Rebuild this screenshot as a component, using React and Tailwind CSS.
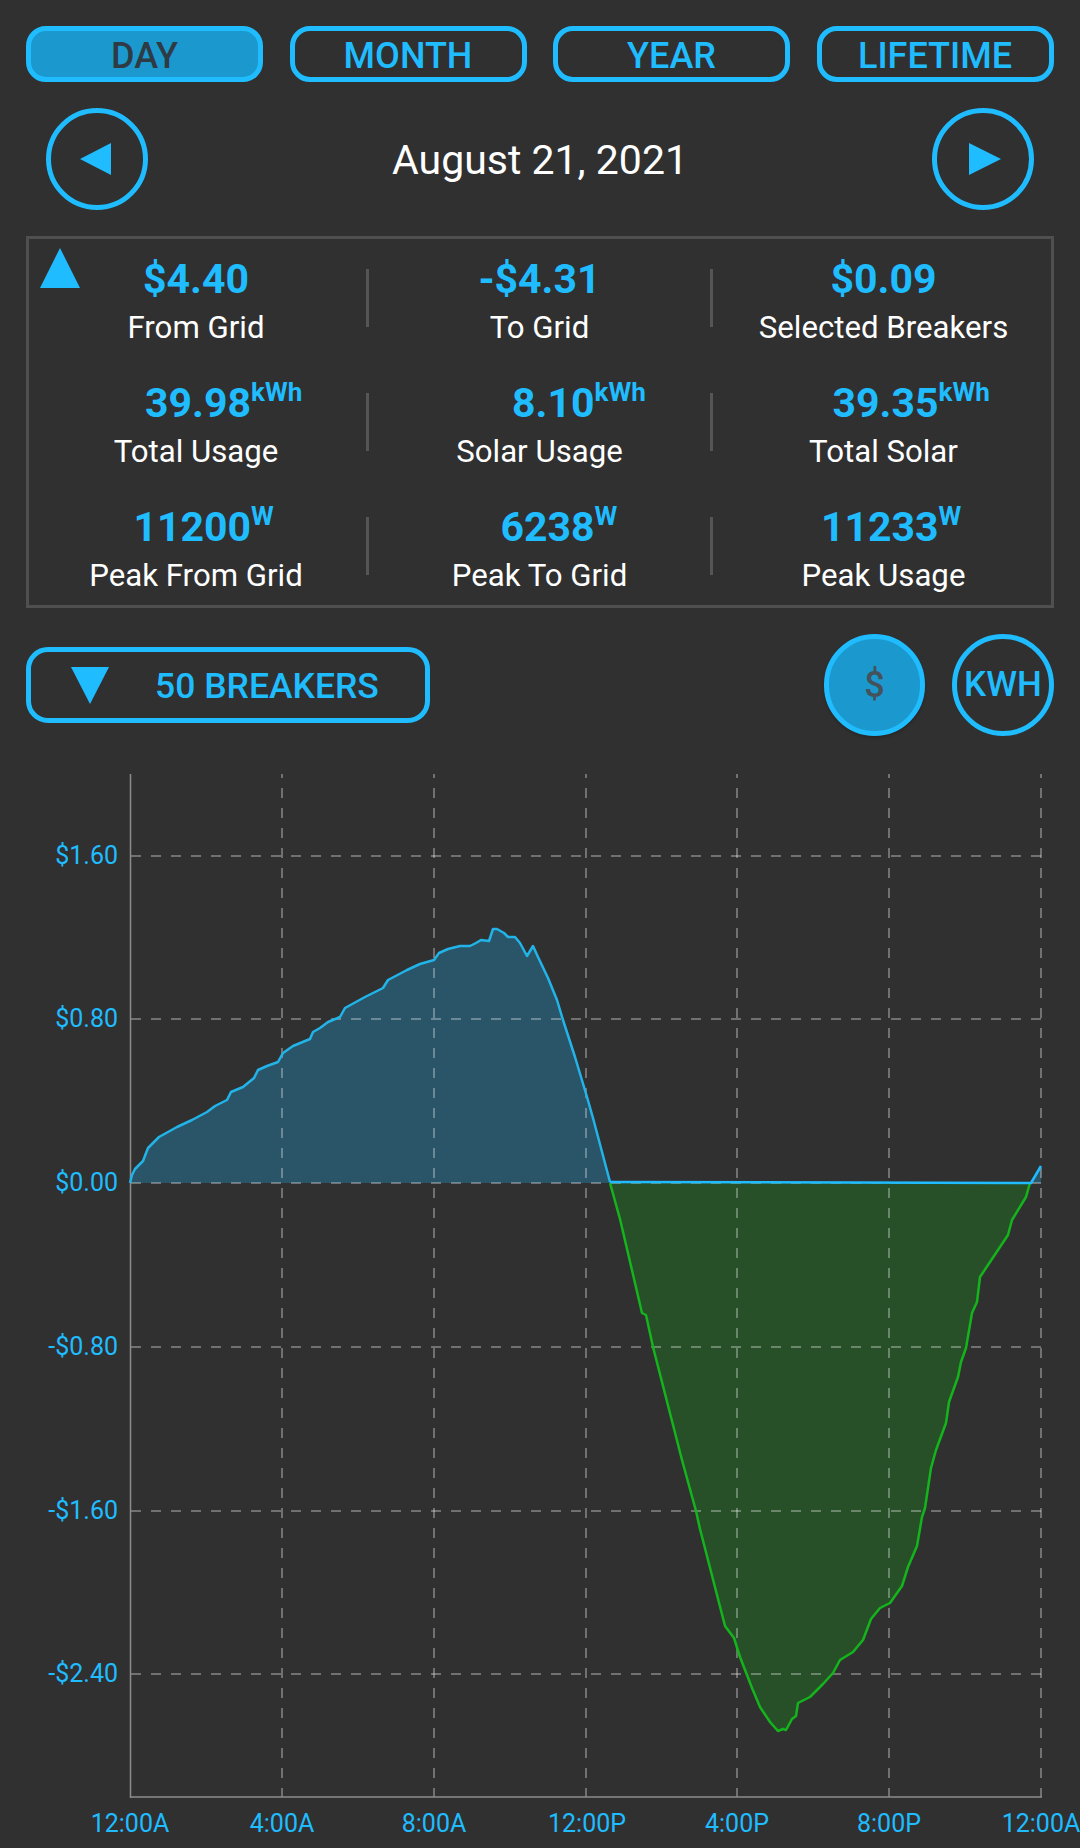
const tabs = ['DAY', 'MONTH', 'YEAR', 'LIFETIME'];

const stats = [
  [
    { value: '$4.40', label: 'From Grid' },
    { value: '-$4.31', label: 'To Grid' },
    { value: '$0.09', label: 'Selected Breakers' },
  ],
  [
    { value: '39.98', unit: 'kWh', label: 'Total Usage' },
    { value: '8.10', unit: 'kWh', label: 'Solar Usage' },
    { value: '39.35', unit: 'kWh', label: 'Total Solar' },
  ],
  [
    { value: '11200', unit: 'W', label: 'Peak From Grid' },
    { value: '6238', unit: 'W', label: 'Peak To Grid' },
    { value: '11233', unit: 'W', label: 'Peak Usage' },
  ],
];

// chart coords are page pixels minus the svg origin (0, 760)
const blueLine = [[130,1183],[132,1175],[135,1169],[143,1161],[148,1148],[159,1137],[177,1127],[192,1120],[207,1112],[215,1106],[227,1100],[231,1092],[243,1087],[254,1078],[258,1070],[267,1066],[278,1062],[283,1053],[293,1046],[310,1039],[313,1032],[320,1028],[328,1022],[340,1017],[345,1008],[365,997],[383,988],[388,980],[407,970],[420,964],[434,960],[439,953],[448,949],[460,946],[470,946],[476,943],[481,940],[489,941],[493,929],[497,929],[504,933],[508,937],[515,937],[520,943],[527,956],[533,946],[538,957],[548,978],[557,1000],[563,1020],[575,1057],[587,1097],[593,1118],[610,1182]];
const flatLine = [[610,1182],[1031,1183],[1041,1166]];
const greenLine = [[610,1183],[620,1219],[642,1313],[646,1315],[653,1347],[682,1460],[696,1511],[700,1529],[725,1626],[734,1638],[740,1657],[752,1688],[760,1707],[770,1722],[778,1731],[783,1729],[786,1730],[792,1719],[796,1716],[798,1703],[810,1697],[823,1684],[833,1673],[840,1660],[853,1652],[863,1640],[871,1619],[880,1608],[890,1603],[902,1586],[908,1567],[917,1546],[922,1517],[925,1508],[931,1468],[936,1450],[946,1423],[949,1402],[958,1377],[961,1362],[966,1348],[972,1313],[977,1302],[980,1277],[1008,1235],[1012,1220],[1026,1197],[1030,1183]];

const toPoints = (pts) => pts.map(([x, y]) => `${x},${y - 760}`).join(' ');

const gridX = [282, 434, 586, 737, 889, 1041];
const gridY = [
  { y: 856, label: '$1.60' },
  { y: 1019, label: '$0.80' },
  { y: 1183, label: '$0.00' },
  { y: 1347, label: '-$0.80' },
  { y: 1511, label: '-$1.60' },
  { y: 1674, label: '-$2.40' },
];
const timeLabels = [
  { x: 130, label: '12:00A' },
  { x: 282, label: '4:00A' },
  { x: 434, label: '8:00A' },
  { x: 587, label: '12:00P' },
  { x: 737, label: '4:00P' },
  { x: 889, label: '8:00P' },
  { x: 1041, label: '12:00A' },
];

function Triangle({ dir, className }) {
  const points = { up: '50,0 100,100 0,100', down: '0,0 100,0 50,100', left: '0,50 100,0 100,100', right: '0,0 100,50 0,100' };
  return (
    <svg viewBox="0 0 100 100" preserveAspectRatio="none" className={className}>
      <polygon points={points[dir]} fill="#1fbcff" />
    </svg>
  );
}

function Stat({ value, unit, label }) {
  return (
    <div className="flex-1 flex flex-col items-center pt-[4px]">
      {unit ? (
        <div className="w-full flex items-start h-[44px]">
          <div className="w-[calc(50%+55px)] text-right text-[41px] leading-[44px] font-bold text-[#1fbcff] whitespace-nowrap">{value}</div>
          <div className="text-[26px] leading-[28px] font-bold text-[#1fbcff] -mt-[3px]">{unit}</div>
        </div>
      ) : (
        <div className="h-[44px] text-center text-[41px] leading-[44px] font-bold text-[#1fbcff] whitespace-nowrap">{value}</div>
      )}
      <div className="mt-[12px] text-[31.2px] leading-[30px] text-white whitespace-nowrap">{label}</div>
    </div>
  );
}

function Chart() {
  return (
    <svg width="1080" height="1088" viewBox="0 0 1080 1088" className="block" style={{ fontFamily: 'Roboto, sans-serif' }}>
      <polygon points={toPoints([...blueLine, [610, 1183]])} fill="#2a5468" />
      <polygon points={toPoints([[1031, 1183], [1041, 1166], [1041, 1183]])} fill="#2a5468" />
      <polygon points={toPoints(greenLine)} fill="#285028" />

      {gridY.map((g) => (
        <line key={g.y} x1="131" x2="1041" y1={g.y - 760} y2={g.y - 760} stroke="#fff" strokeOpacity="0.42" strokeWidth="1.5" strokeDasharray="10 10" />
      ))}
      {gridX.map((x) => (
        <line key={x} x1={x} x2={x} y1="14" y2="1037" stroke="#fff" strokeOpacity="0.42" strokeWidth="1.5" strokeDasharray="10 10" strokeDashoffset="6" />
      ))}
      <line x1="130.5" x2="130.5" y1="14" y2="1038" stroke="#8c8c8c" strokeWidth="1.5" />
      <line x1="130" x2="1042" y1="1037" y2="1037" stroke="#8c8c8c" strokeWidth="1.5" />

      <polyline points={toPoints(greenLine)} fill="none" stroke="#14b41c" strokeWidth="2.5" strokeLinejoin="round" />
      <polyline points={toPoints(blueLine)} fill="none" stroke="#22b4e8" strokeWidth="2.5" strokeLinejoin="round" />
      <polyline points={toPoints(flatLine)} fill="none" stroke="#1fbcff" strokeWidth="2.5" strokeLinejoin="round" />

      {gridY.map((g) => (
        <text key={g.label} x="118" y={g.y - 760 + 8} textAnchor="end" fontSize="25" fill="#1fbcff">{g.label}</text>
      ))}
      {timeLabels.map((t) => (
        <text key={t.x} x={t.x} y="1072" textAnchor="middle" fontSize="25" fill="#1fbcff">{t.label}</text>
      ))}
    </svg>
  );
}

export default function App() {
  return (
    <div className="w-[1080px] h-[1848px] bg-[#303030] overflow-hidden font-['Roboto',sans-serif]">
      <div className="flex gap-[26.5px] pl-[26px] pt-[26px]">
        {tabs.map((t, i) => (
          <button
            key={t}
            className={`w-[237px] h-[56px] pt-[4px] rounded-[20px] border-[5px] border-[#1fbcff] text-[36px] font-medium leading-none ${i === 0 ? 'bg-[#1b99cf] text-[#2f3b44]' : 'text-[#1fbcff]'}`}
          >
            {t}
          </button>
        ))}
      </div>

      <div className="flex items-center justify-between pl-[46px] pr-[46px] mt-[26px]">
        <button className="w-[102px] h-[102px] rounded-full border-[5px] border-[#1fbcff] flex items-center justify-center">
          <Triangle dir="left" className="w-[31px] h-[32px] -ml-[4px]" />
        </button>
        <div className="text-[41px] pt-[3px] text-white">August 21, 2021</div>
        <button className="w-[102px] h-[102px] rounded-full border-[5px] border-[#1fbcff] flex items-center justify-center">
          <Triangle dir="right" className="w-[32px] h-[32px] ml-[4px]" />
        </button>
      </div>

      <div className="relative mx-[26px] mt-[26px] h-[372px] border-[3px] border-[#4f4f4f] flex flex-col">
        <Triangle dir="up" className="absolute left-[11px] top-[9px] w-[40px] h-[40px]" />
        {stats.map((row, r) => (
          <div key={r} className={`flex items-center h-[58px] ${r === 0 ? 'mt-[30px]' : 'mt-[66px]'}`}>
            <div className="flex items-center h-full w-[337px] pr-[3px]">
              <Stat {...row[0]} />
            </div>
            <div className="flex items-center h-full w-[344px] border-l-[3px] border-[#555555]">
              <Stat {...row[1]} />
            </div>
            <div className="flex items-center h-full w-[341px] pl-[3px] border-l-[3px] border-[#555555]">
              <Stat {...row[2]} />
            </div>
          </div>
        ))}
      </div>

      <div className="flex items-center justify-between pl-[26px] pr-[26px] mt-[26px]">
        <button className="w-[404px] h-[76px] rounded-[22px] border-[5px] border-[#1fbcff] flex items-center">
          <Triangle dir="down" className="w-[38px] h-[37px] ml-[40px]" />
          <span className="ml-[46px] pt-[3px] text-[35.5px] leading-none font-medium text-[#1fbcff]">50 BREAKERS</span>
        </button>
        <div className="flex gap-[27px]">
          <div className="w-[101px] h-[102px] rounded-full border-[5px] border-[#1fbcff] bg-[#1b99cf] flex items-center justify-center text-[36px] font-medium text-[#44525c] shadow-[0_2px_3px_rgba(0,0,0,0.2)]">$</div>
          <div className="w-[102px] h-[102px] rounded-full border-[5px] border-[#1fbcff] flex items-center justify-center text-[35px] font-medium text-[#1fbcff]">KWH</div>
        </div>
      </div>

      <div className="mt-[24px]">
        <Chart />
      </div>
    </div>
  );
}
